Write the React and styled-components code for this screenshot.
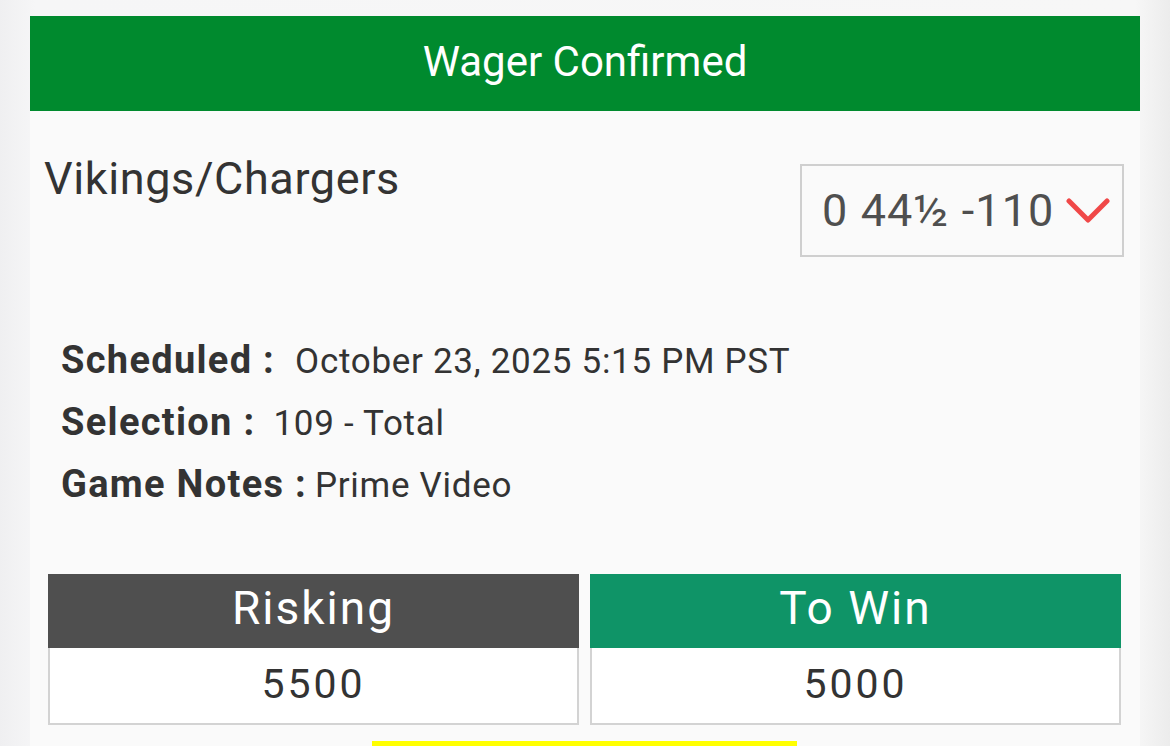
import React from "react";
import styled, { createGlobalStyle } from "styled-components";

const GlobalStyle = createGlobalStyle`
    html, body {
        margin: 0;
        padding: 0;
        background: #f2f2f3;
        font-family: Roboto, "Liberation Sans", sans-serif;
    }
`;

const Page = styled.div`
    width: 1170px;
    height: 746px;
    overflow: hidden;
    padding: 16px 30px 0 30px;
    box-sizing: border-box;
    background: linear-gradient(90deg, #efeff1 0%, #f6f6f7 3%, #f7f7f7 97%, #ececec 100%);
`;

const Card = styled.div`
    background: #fafafa;
    min-height: 730px;
`;

const Banner = styled.div`
    height: 95px;
    box-sizing: border-box;
    padding-bottom: 4px;
    background: #008a2e;
    color: #fff;
    display: flex;
    align-items: center;
    justify-content: center;
    font-size: 42px;
`;

const TitleRow = styled.div`
    display: flex;
    justify-content: space-between;
    align-items: flex-start;
    padding: 53px 16px 0 14px;
`;

const Matchup = styled.div`
    font-size: 45px;
    color: #333;
    line-height: 50px;
    letter-spacing: 0.6px;
    margin-top: -10px;
`;

const LineSelect = styled.div`
    width: 324px;
    height: 93px;
    box-sizing: border-box;
    border: 2px solid #cfcfcf;
    display: flex;
    align-items: center;
    padding-left: 20px;
    gap: 12px;
    font-size: 45px;
    letter-spacing: 1.1px;
    color: #4f4f4f;
    background: #fafafa;
`;

const Details = styled.div`
    display: flex;
    flex-direction: column;
    padding: 73px 0 0 31px;
`;

const DetailRow = styled.div`
    display: flex;
    align-items: baseline;
    color: #333;
    line-height: 61px;
`;

const Label = styled.span`
    font-size: 38px;
    font-weight: 700;
    letter-spacing: 1.3px;
    margin-right: ${p => p.$gap}px;
`;

const Value = styled.span`
    font-size: 35px;
    letter-spacing: 0.7px;
`;

const Amounts = styled.div`
    display: grid;
    grid-template-columns: 531px 531px;
    gap: 11px;
    padding: 58px 0 0 18px;
`;

const AmountBox = styled.div`
    display: flex;
    flex-direction: column;
`;

const AmountHead = styled.div`
    height: 74px;
    box-sizing: border-box;
    padding-bottom: 6px;
    background: ${p => p.$color};
    color: #fff;
    font-size: 46px;
    letter-spacing: 2px;
    display: flex;
    align-items: center;
    justify-content: center;
`;

const AmountValue = styled.div`
    height: 77px;
    box-sizing: border-box;
    background: #fff;
    border: 2px solid #d3d3d3;
    border-top: none;
    display: flex;
    align-items: center;
    justify-content: center;
    padding-bottom: 4px;
    font-size: 41px;
    letter-spacing: 3px;
    color: #333;
`;

const Highlight = styled.div`
    width: 425px;
    height: 6px;
    background: #ffff00;
    margin: 16px 0 0 342px;
`;

const Chevron = () => (
    <svg width="44" height="28" viewBox="0 0 44 28">
        <path d="M3 4 L22 23 L41 4" fill="none" stroke="#f04848" strokeWidth="5" strokeLinecap="round" strokeLinejoin="round" />
    </svg>
);

const details = [
    { label: "Scheduled :", value: "October 23, 2025 5:15 PM PST", gap: 20 },
    { label: "Selection :", value: "109 - Total", gap: 18 },
    { label: "Game Notes :", value: "Prime Video", gap: 8 },
];

export default function App() {
    return (
        <>
            <GlobalStyle />
            <Page>
                <Card>
                    <Banner>Wager Confirmed</Banner>
                    <TitleRow>
                        <Matchup>Vikings/Chargers</Matchup>
                        <LineSelect>
                            <span>0 44½ -110</span>
                            <Chevron />
                        </LineSelect>
                    </TitleRow>
                    <Details>
                        {details.map(d => (
                            <DetailRow key={d.label}>
                                <Label $gap={d.gap}>{d.label}</Label>
                                <Value>{d.value}</Value>
                            </DetailRow>
                        ))}
                    </Details>
                    <Amounts>
                        <AmountBox>
                            <AmountHead $color="#4f4f4f">Risking</AmountHead>
                            <AmountValue>5500</AmountValue>
                        </AmountBox>
                        <AmountBox>
                            <AmountHead $color="#0f9467">To Win</AmountHead>
                            <AmountValue>5000</AmountValue>
                        </AmountBox>
                    </Amounts>
                    <Highlight />
                </Card>
            </Page>
        </>
    );
}
